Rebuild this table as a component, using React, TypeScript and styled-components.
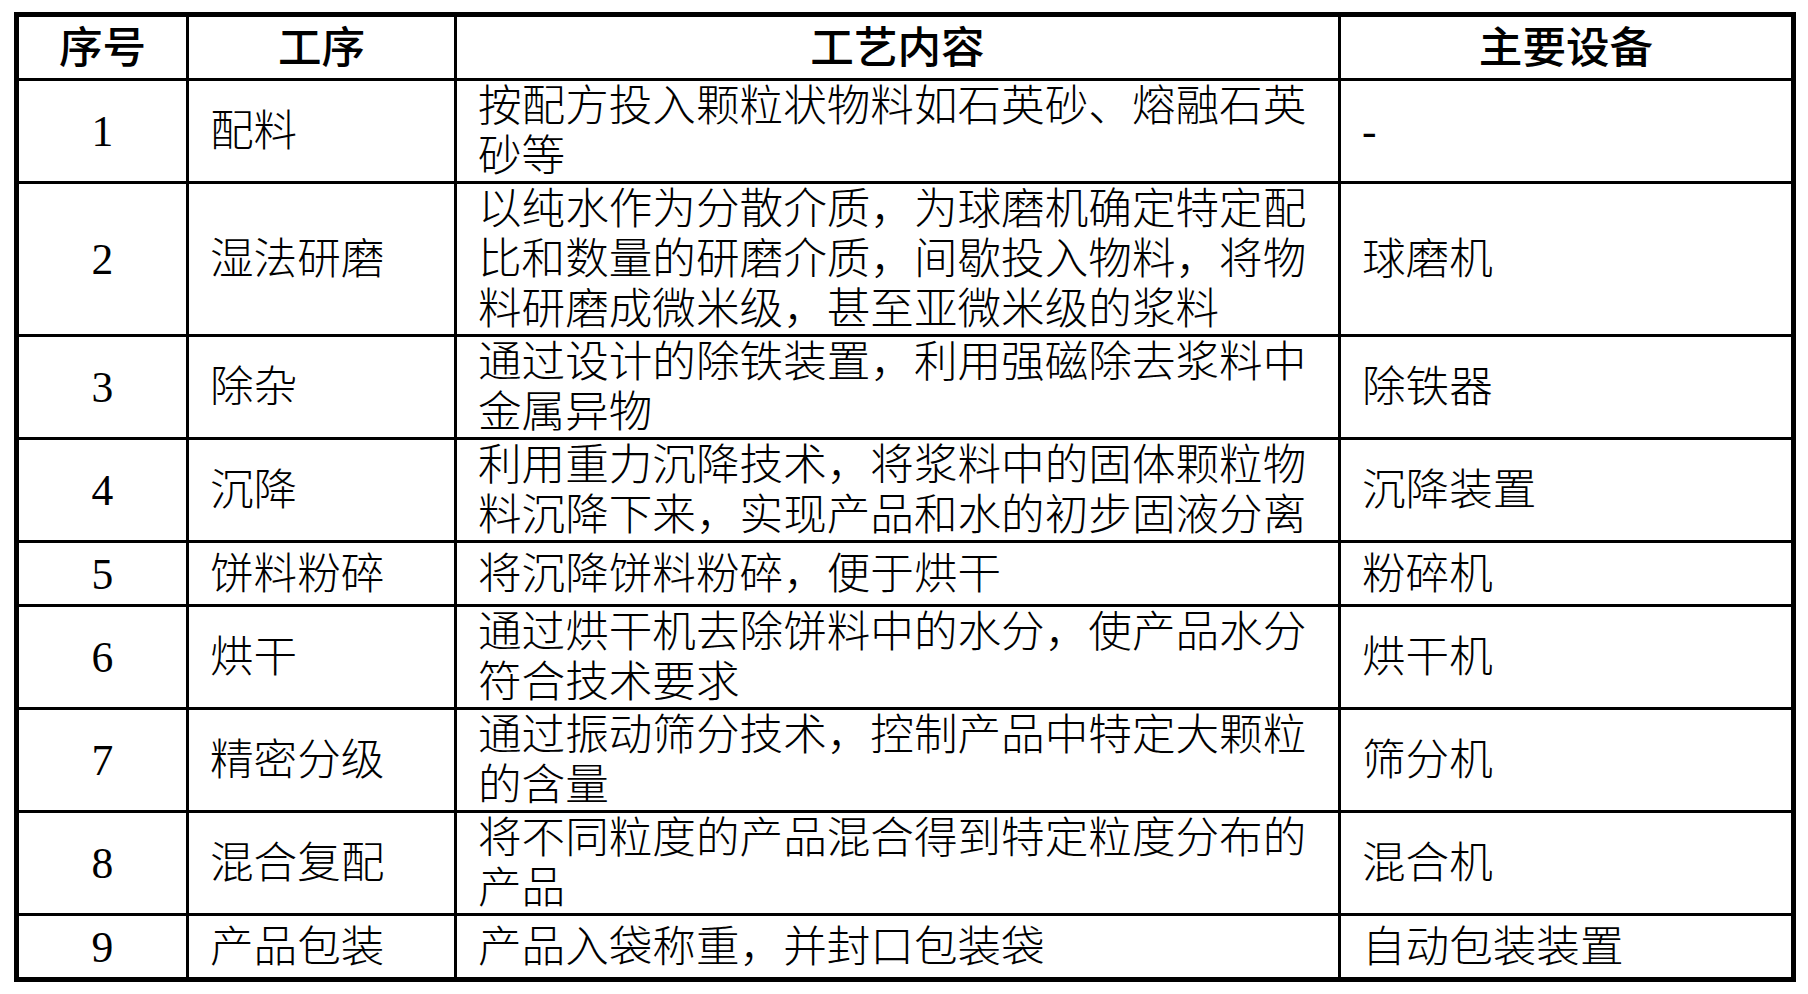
import React from 'react'
import styled, { createGlobalStyle } from 'styled-components'

const GlobalStyle = createGlobalStyle`
  html, body {
    margin: 0;
    padding: 0;
    background: #ffffff;
  }
  body {
    font-family: "Liberation Serif", "Noto Sans CJK SC", serif;
    color: #000000;
  }
`

const Page = styled.div`
  padding: 12px 12px 0 14px;
  width: 1782px;
`

const Table = styled.div`
  display: flex;
  flex-direction: column;
  gap: 3px;
  background: #000000;
  border: 5px solid #000000;
  width: 1772px;
`

const Row = styled.div`
  display: grid;
  grid-template-columns: 167px 265px 881px 450px;
  gap: 3px;
  min-height: 61px;
`

const Cell = styled.div<{ $center?: boolean; $head?: boolean }>`
  display: flex;
  flex-direction: column;
  justify-content: center;
  align-items: ${({ $center }) => ($center ? 'center' : 'flex-start')};
  background: #ffffff;
  padding: 0 ${({ $center }) => ($center ? '0' : '21px')};
  font-size: 43.6px;
  line-height: 50px;
  font-weight: ${({ $head }) => ($head ? 500 : 300)};
`

const Line = styled.span`
  display: block;
  white-space: nowrap;
`

type Step = {
  no: string
  name: string
  content: string[]
  device: string
}

const steps: Step[] = [
  { no: '1', name: '配料', content: ['按配方投入颗粒状物料如石英砂、熔融石英', '砂等'], device: '-' },
  {
    no: '2',
    name: '湿法研磨',
    content: ['以纯水作为分散介质，为球磨机确定特定配', '比和数量的研磨介质，间歇投入物料，将物', '料研磨成微米级，甚至亚微米级的浆料'],
    device: '球磨机',
  },
  { no: '3', name: '除杂', content: ['通过设计的除铁装置，利用强磁除去浆料中', '金属异物'], device: '除铁器' },
  { no: '4', name: '沉降', content: ['利用重力沉降技术，将浆料中的固体颗粒物', '料沉降下来，实现产品和水的初步固液分离'], device: '沉降装置' },
  { no: '5', name: '饼料粉碎', content: ['将沉降饼料粉碎，便于烘干'], device: '粉碎机' },
  { no: '6', name: '烘干', content: ['通过烘干机去除饼料中的水分，使产品水分', '符合技术要求'], device: '烘干机' },
  { no: '7', name: '精密分级', content: ['通过振动筛分技术，控制产品中特定大颗粒', '的含量'], device: '筛分机' },
  { no: '8', name: '混合复配', content: ['将不同粒度的产品混合得到特定粒度分布的', '产品'], device: '混合机' },
  { no: '9', name: '产品包装', content: ['产品入袋称重，并封口包装袋'], device: '自动包装装置' },
]

const App = () => {
  return (
    <>
      <GlobalStyle />
      <Page>
        <Table>
          <Row>
            <Cell $center $head>序号</Cell>
            <Cell $center $head>工序</Cell>
            <Cell $center $head>工艺内容</Cell>
            <Cell $center $head>主要设备</Cell>
          </Row>
          {steps.map((s) => (
            <Row key={s.no}>
              <Cell $center>{s.no}</Cell>
              <Cell>{s.name}</Cell>
              <Cell>
                {s.content.map((line, i) => (
                  <Line key={i}>{line}</Line>
                ))}
              </Cell>
              <Cell>{s.device}</Cell>
            </Row>
          ))}
        </Table>
      </Page>
    </>
  )
}

export default App
